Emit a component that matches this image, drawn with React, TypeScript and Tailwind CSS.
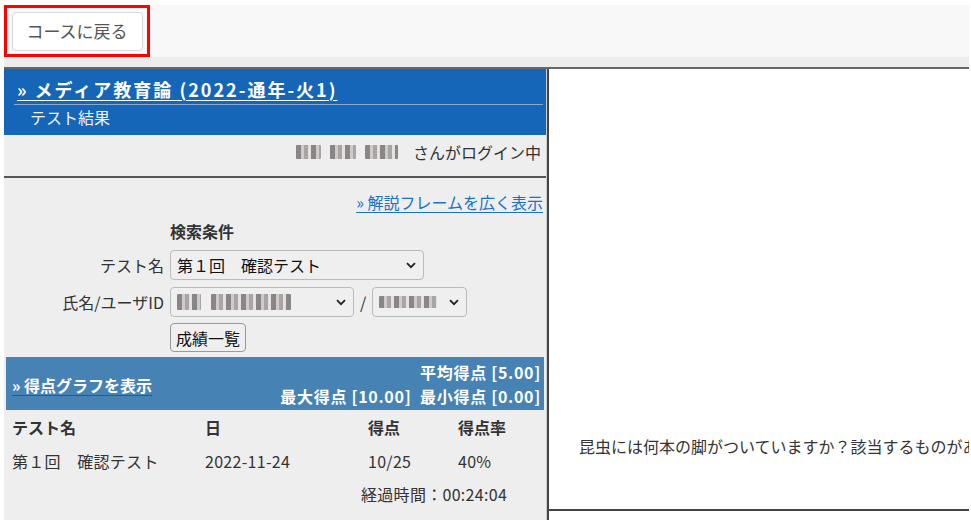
import React from "react";

const Blur = ({ w, h = 14 }: { w: number; h?: number }) => (
  <span
    className="inline-block rounded-[1px]"
    style={{
      width: w,
      height: h,
      background:
        "repeating-linear-gradient(90deg,#8a8686 0 5px,#cfcbcb 5px 8px,#a9a5a5 8px 12px,#e3e1e1 12px 15px)",
      filter: "blur(0.6px)",
    }}
  />
);

const Chevron = () => (
  <svg width="10" height="7" viewBox="0 0 10 7" className="shrink-0">
    <path d="M1 1.2 L5 5.2 L9 1.2" fill="none" stroke="#222" strokeWidth="1.8" />
  </svg>
);

export default function App() {
  const font = { fontFamily: '"Noto Sans CJK JP", "Noto Sans", sans-serif' };
  return (
    <div className="w-[971px] h-[520px] overflow-hidden bg-white pt-[5px] pl-[4px] pr-[2px] text-[#333]" style={font}>
      {/* top toolbar */}
      <div className="h-[52px] bg-[#f8f8f8] flex items-stretch">
        <div className="w-[146px] border-[3px] border-[#ff0000] flex items-center justify-center">
          <div className="w-[131px] h-[39px] bg-white border border-[#d8d8d8] rounded-[4px] flex items-center justify-center text-[17px] text-[#555]">
            コースに戻る
          </div>
        </div>
      </div>
      <div className="h-[10px] bg-[#ececec]" />
      <div className="h-[2px] bg-[#666]" />

      <div className="flex h-[451px]">
        {/* left column */}
        <div className="w-[542px] shrink-0 flex flex-col bg-[#eeeeee] text-[16px]">
          <div className="h-[66px] shrink-0 bg-[#1565b8] flex flex-col text-white">
            <div className="pl-[13px] pt-[9px] h-[35px] flex items-start">
              <span className="text-[18px] font-bold underline underline-offset-[3px] leading-[22px] tracking-[2px]">
                » メディア教育論 (2022-通年-火1)
              </span>
            </div>
            <div className="ml-[10px] mr-[3px] h-[1px] bg-[#8fa8c8]" />
            <div className="pl-[26px] pt-[1px] text-[16px] leading-[22px] text-[#eef3fa]">テスト結果</div>
          </div>
          <div className="h-[41px] shrink-0 flex items-center justify-end pr-[5px] pb-[8px]">
            <span className="flex items-center gap-[9px] mr-[15px]">
              <Blur w={25} />
              <Blur w={26} />
              <Blur w={33} />
            </span>
            <span>さんがログイン中</span>
          </div>
          <div className="h-[2px] shrink-0 bg-[#555]" />

          <div className="flex-1 flex flex-col">
            <div className="h-[34px] shrink-0 flex items-end justify-end pr-[3px]">
              <span className="text-[#1a72c8] underline underline-offset-[3px] leading-[20px]">» 解説フレームを広く表示</span>
            </div>
            <div className="pl-[166px] h-[38px] shrink-0 flex items-center font-bold">検索条件</div>
            <div className="flex items-center h-[30px] shrink-0">
              <div className="w-[162px] text-right pr-[2px]">テスト名</div>
              <div className="ml-[4px] w-[254px] h-[30px] border border-[#bbb] rounded-[4px] bg-[#efefef] flex items-center justify-between pl-[6px] pr-[7px]">
                <span className="text-[#111]">第１回　確認テスト</span>
                <Chevron />
              </div>
            </div>
            <div className="flex items-center h-[30px] mt-[7px] shrink-0">
              <div className="w-[162px] text-right pr-[2px]">氏名/ユーザID</div>
              <div className="ml-[4px] w-[184px] h-[30px] border border-[#bbb] rounded-[4px] bg-[#efefef] flex items-center justify-between pl-[6px] pr-[7px]">
                <span className="flex items-center gap-[10px]">
                  <Blur w={24} h={16} />
                  <Blur w={80} h={16} />
                </span>
                <Chevron />
              </div>
              <span className="mx-[6px]">/</span>
              <div className="w-[95px] h-[30px] border border-[#bbb] rounded-[4px] bg-[#efefef] flex items-center justify-between pl-[6px] pr-[7px]">
                <Blur w={58} h={12} />
                <Chevron />
              </div>
            </div>
            <div className="pl-[166px] mt-[6px] shrink-0">
              <div className="w-[76px] h-[29px] border border-[#999] rounded-[4px] bg-[#efefef] flex items-center justify-center text-[#111]">
                成績一覧
              </div>
            </div>

            <div className="ml-[2px] mr-[2px] mt-[5px] h-[53px] shrink-0 bg-[#4682b4] text-white font-bold flex items-center justify-between pl-[6px] pr-[3px]">
              <span className="underline underline-offset-[3px] decoration-[#1a5ca8] mt-[2px]">» 得点グラフを表示</span>
              <div className="text-right leading-[24px] tracking-[0.7px]">
                <div>平均得点 [5.00]</div>
                <div>最大得点 [10.00]&nbsp;&nbsp;最小得点 [0.00]</div>
              </div>
            </div>

            <div className="grid grid-cols-[193px_163px_90px_1fr] pl-[8px] font-bold h-[34px] shrink-0 items-center">
              <div>テスト名</div>
              <div>日</div>
              <div>得点</div>
              <div>得点率</div>
            </div>
            <div className="grid grid-cols-[193px_163px_90px_1fr] pl-[8px] h-[34px] shrink-0 items-center tracking-[0.3px]">
              <div>第１回　確認テスト</div>
              <div>2022-11-24</div>
              <div>10/25</div>
              <div>40%</div>
            </div>
            <div className="pl-[357px] h-[32px] shrink-0 flex items-center tracking-[0.3px]">経過時間：00:24:04</div>
          </div>
        </div>

        {/* separator */}
        <div className="w-[1px] shrink-0 bg-[#cfcfcf]" />
        <div className="w-[2px] shrink-0 bg-[#444]" />

        {/* right frame */}
        <div className="flex-1 min-w-0 flex flex-col bg-white">
          <div className="h-[440px] shrink-0 flex items-end pb-[51px] pl-[30px] overflow-hidden text-[16px]">
            <span className="whitespace-nowrap">昆虫には何本の脚がついていますか？該当するものがあれば選んでください。</span>
          </div>
          <div className="h-[2px] bg-[#444]" />
        </div>
      </div>
    </div>
  );
}
